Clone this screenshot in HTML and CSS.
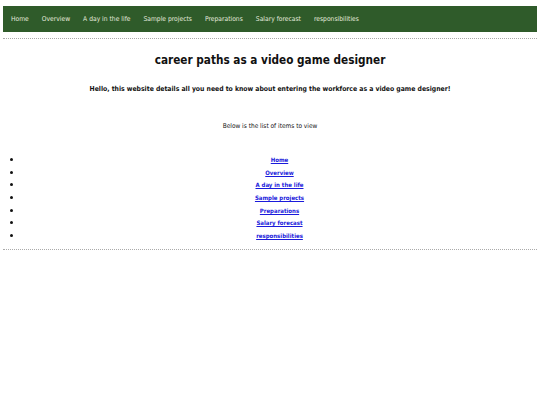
FILE: index.html
```html
<!DOCTYPE html>
<html>
<head>
<meta charset="utf-8">
<link rel="stylesheet" href="styles.css">
</head>
<body>
<nav class="topnav">
  <a href="#">Home</a>
  <a href="#">Overview</a>
  <a href="#">A day in the life</a>
  <a href="#">Sample projects</a>
  <a href="#">Preparations</a>
  <a href="#">Salary forecast</a>
  <a href="#">responsibilities</a>
</nav>
<hr class="rule">
<h1 class="title">career paths as a video game designer</h1>
<p class="intro">Hello, this website details all you need to know about entering the workforce as a video game designer!</p>
<p class="below">Below is the list of items to view</p>
<ul class="items">
  <li><a href="#">Home</a></li>
  <li><a href="#">Overview</a></li>
  <li><a href="#">A day in the life</a></li>
  <li><a href="#">Sample projects</a></li>
  <li><a href="#">Preparations</a></li>
  <li><a href="#">Salary forecast</a></li>
  <li><a href="#">responsibilities</a></li>
</ul>
<hr class="rule rule-end">
</body>
</html>
```

FILE: styles.css
```css
html, body {
  margin: 0;
  padding: 0;
  background: #fff;
}
body {
  padding: 6px 3px 0 3px;
  font-family: "DejaVu Sans Condensed", "DejaVu Sans", sans-serif;
  color: #111;
}
.topnav {
  background: #2f5b2a;
  height: 26px;
  display: flex;
  align-items: center;
  gap: 13px;
  padding: 0 8px;
}
.topnav a {
  color: #e4eadd;
  text-decoration: none;
  font-size: 6.7px;
  font-weight: normal;
}
.rule {
  border: 0;
  border-top: 1px dotted #aaa;
  margin: 6px 0 0 0;
  height: 0;
}
.rule-end {
  margin-top: 7px;
}
.title {
  text-align: center;
  font-size: 11.7px;
  margin: 14px 0 0 0;
  font-weight: bold;
}
.intro {
  text-align: center;
  font-size: 6.8px;
  font-weight: bold;
  margin: 18px 0 0 0;
}
.below {
  text-align: center;
  font-size: 6.5px;
  margin: 29px 0 0 0;
}
.items {
  margin: 23px 0 0 0;
  padding: 0 0 0 19px;
  font-size: 6px;
  text-align: center;
}
.items li {
  height: 12.7px;
  line-height: 12.7px;
}
.items li::marker {
  font-size: 9px;
}
.items a {
  color: #1a1adb;
  font-weight: bold;
}
```
